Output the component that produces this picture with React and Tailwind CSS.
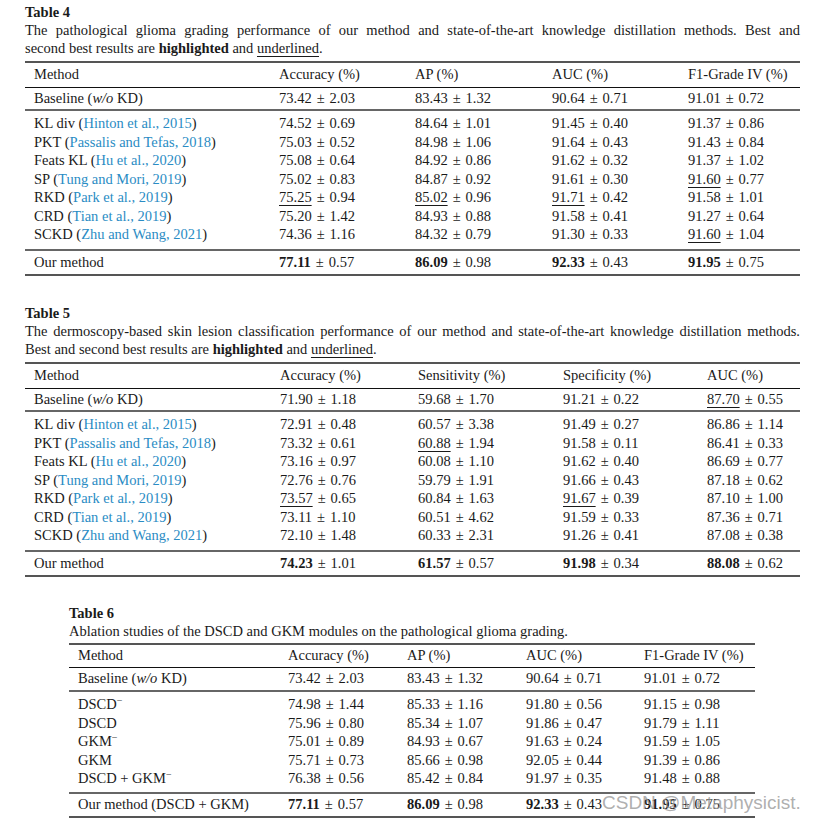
const LINK = "text-[#2a8cc4]";

const t4 = [
  ["KL div", "Hinton et al., 2015", ["74.52", "0.69"], ["84.64", "1.01"], ["91.45", "0.40"], ["91.37", "0.86"]],
  ["PKT", "Passalis and Tefas, 2018", ["75.03", "0.52"], ["84.98", "1.06"], ["91.64", "0.43"], ["91.43", "0.84"]],
  ["Feats KL", "Hu et al., 2020", ["75.08", "0.64"], ["84.92", "0.86"], ["91.62", "0.32"], ["91.37", "1.02"]],
  ["SP", "Tung and Mori, 2019", ["75.02", "0.83"], ["84.87", "0.92"], ["91.61", "0.30"], ["91.60", "0.77", "u"]],
  ["RKD", "Park et al., 2019", ["75.25", "0.94", "u"], ["85.02", "0.96", "u"], ["91.71", "0.42", "u"], ["91.58", "1.01"]],
  ["CRD", "Tian et al., 2019", ["75.20", "1.42"], ["84.93", "0.88"], ["91.58", "0.41"], ["91.27", "0.64"]],
  ["SCKD", "Zhu and Wang, 2021", ["74.36", "1.16"], ["84.32", "0.79"], ["91.30", "0.33"], ["91.60", "1.04", "u"]],
];

const t5 = [
  ["KL div", "Hinton et al., 2015", ["72.91", "0.48"], ["60.57", "3.38"], ["91.49", "0.27"], ["86.86", "1.14"]],
  ["PKT", "Passalis and Tefas, 2018", ["73.32", "0.61"], ["60.88", "1.94", "u"], ["91.58", "0.11"], ["86.41", "0.33"]],
  ["Feats KL", "Hu et al., 2020", ["73.16", "0.97"], ["60.08", "1.10"], ["91.62", "0.40"], ["86.69", "0.77"]],
  ["SP", "Tung and Mori, 2019", ["72.76", "0.76"], ["59.79", "1.91"], ["91.66", "0.43"], ["87.18", "0.62"]],
  ["RKD", "Park et al., 2019", ["73.57", "0.65", "u"], ["60.84", "1.63"], ["91.67", "0.39", "u"], ["87.10", "1.00"]],
  ["CRD", "Tian et al., 2019", ["73.11", "1.10"], ["60.51", "4.62"], ["91.59", "0.33"], ["87.36", "0.71"]],
  ["SCKD", "Zhu and Wang, 2021", ["72.10", "1.48"], ["60.33", "2.31"], ["91.26", "0.41"], ["87.08", "0.38"]],
];

const t6 = [
  ["DSCD", true, ["74.98", "1.44"], ["85.33", "1.16"], ["91.80", "0.56"], ["91.15", "0.98"]],
  ["DSCD", false, ["75.96", "0.80"], ["85.34", "1.07"], ["91.86", "0.47"], ["91.79", "1.11"]],
  ["GKM", true, ["75.01", "0.89"], ["84.93", "0.67"], ["91.63", "0.24"], ["91.59", "1.05"]],
  ["GKM", false, ["75.71", "0.73"], ["85.66", "0.98"], ["92.05", "0.44"], ["91.39", "0.86"]],
  ["DSCD + GKM", true, ["76.38", "0.56"], ["85.42", "0.84"], ["91.97", "0.35"], ["91.48", "0.88"]],
];

function Val({ v }) {
  const [m, s, mark] = v;
  let head = <span>{m}</span>;
  if (mark === "u") head = <span className="underline decoration-1 underline-offset-[3px]">{m}</span>;
  if (mark === "b") head = <span className="font-bold">{m}</span>;
  return (
    <span>
      {head}
      <span className="mx-[5px]">±</span>
      {s}
    </span>
  );
}

function Row({ cols, cells, className = "" }) {
  return (
    <div className={`grid ${cols} ${className}`}>
      {cells.map((c, i) => (
        <div key={i} className="pl-[9px] whitespace-nowrap">
          {c}
        </div>
      ))}
    </div>
  );
}

function Caption({ title, lines }) {
  return (
    <div className="leading-[18px]">
      <div className="font-bold">{title}</div>
      {lines.map((l, i) => (
        <div
          key={i}
          className={i < lines.length - 1 ? "text-justify [text-align-last:justify]" : ""}
        >
          {l}
        </div>
      ))}
    </div>
  );
}

const hl = (
  <>
    <span className="font-bold">highlighted</span> and{" "}
    <span className="underline decoration-1 underline-offset-[3px]">underlined</span>.
  </>
);

function Cite({ name, cite }) {
  return (
    <span>
      {name} (<span className={LINK}>{cite}</span>)
    </span>
  );
}

const baseline = (
  <span>
    Baseline (<span className="italic">w/o</span> KD)
  </span>
);

function BigTable({ cols, headers, base, rows, ours }) {
  return (
    <div className="mt-[4px] border-t-2 border-b-2 border-[#555]">
      <Row cols={cols} cells={headers} className="h-[25px] items-center border-b border-[#111]" />
      <Row cols={cols} cells={[baseline, ...base.map((v, i) => <Val key={i} v={v} />)]} className="h-[23px] items-center border-b-2 border-[#666]" />
      <div className="h-[134px] py-[2px] border-b-2 border-[#666] box-content">
        {rows.map((r, i) => (
          <Row
            key={i}
            cols={cols}
            className="h-[18.5px] items-center"
            cells={[<Cite name={r[0]} cite={r[1]} />, ...r.slice(2).map((v, j) => <Val key={j} v={v} />)]}
          />
        ))}
      </div>
      <Row cols={cols} cells={ours} className="h-[23px] items-center" />
    </div>
  );
}

export default function App() {
  return (
    <div
      className="relative w-[814px] h-[823px] bg-white text-[#1a1a1a] text-[14.5px] overflow-hidden"
      style={{ fontFamily: '"Liberation Serif", "Times New Roman", serif' }}
    >
      <div className="pl-[25px] pr-[14px] pt-[3px]">
        <Caption
          title="Table 4"
          lines={[
            "The pathological glioma grading performance of our method and state-of-the-art knowledge distillation methods. Best and",
            <>second best results are {hl}</>,
          ]}
        />
        <BigTable
          cols="grid-cols-[245px_136px_137px_136px_121px]"
          headers={["Method", "Accuracy (%)", "AP (%)", "AUC (%)", "F1-Grade IV (%)"]}
          base={[["73.42", "2.03"], ["83.43", "1.32"], ["90.64", "0.71"], ["91.01", "0.72"]]}
          rows={t4}
          ours={[
            "Our method",
            <Val v={["77.11", "0.57", "b"]} />,
            <Val v={["86.09", "0.98", "b"]} />,
            <Val v={["92.33", "0.43", "b"]} />,
            <Val v={["91.95", "0.75", "b"]} />,
          ]}
        />

        <div className="mt-[28px]">
          <Caption
            title="Table 5"
            lines={[
              "The dermoscopy-based skin lesion classification performance of our method and state-of-the-art knowledge distillation methods.",
              <>Best and second best results are {hl}</>,
            ]}
          />
        </div>
        <BigTable
          cols="grid-cols-[246px_138px_145px_144px_102px]"
          headers={["Method", "Accuracy (%)", "Sensitivity (%)", "Specificity (%)", "AUC (%)"]}
          base={[["71.90", "1.18"], ["59.68", "1.70"], ["91.21", "0.22"], ["87.70", "0.55", "u"]]}
          rows={t5}
          ours={[
            "Our method",
            <Val v={["74.23", "1.01", "b"]} />,
            <Val v={["61.57", "0.57", "b"]} />,
            <Val v={["91.98", "0.34", "b"]} />,
            <Val v={["88.08", "0.62", "b"]} />,
          ]}
        />
      </div>

      <div className="ml-[69px] w-[686px] mt-[27px]">
        <Caption title="Table 6" lines={["Ablation studies of the DSCD and GKM modules on the pathological glioma grading."]} />
        <div className="mt-[3px] border-t-2 border-b-2 border-[#555]">
          {(() => {
            const cols = "grid-cols-[210px_119px_119px_118px_120px]";
            return (
              <>
                <Row cols={cols} cells={["Method", "Accuracy (%)", "AP (%)", "AUC (%)", "F1-Grade IV (%)"]} className="h-[23px] items-center border-b border-[#111]" />
                <Row
                  cols={cols}
                  cells={[baseline, <Val v={["73.42", "2.03"]} />, <Val v={["83.43", "1.32"]} />, <Val v={["90.64", "0.71"]} />, <Val v={["91.01", "0.72"]} />]}
                  className="h-[24px] items-center border-b-2 border-[#666]"
                />
                <div className="h-[96px] py-[2px] border-b-2 border-[#666] box-content">
                  {t6.map((r, i) => (
                    <Row
                      key={i}
                      cols={cols}
                      className="h-[18.5px] items-center"
                      cells={[
                        <span>
                          {r[0]}
                          {r[1] && <sup className="text-[10px]">−</sup>}
                        </span>,
                        ...r.slice(2).map((v, j) => <Val key={j} v={v} />),
                      ]}
                    />
                  ))}
                </div>
                <Row
                  cols={cols}
                  cells={[
                    "Our method (DSCD + GKM)",
                    <Val v={["77.11", "0.57", "b"]} />,
                    <Val v={["86.09", "0.98", "b"]} />,
                    <Val v={["92.33", "0.43", "b"]} />,
                    <Val v={["91.95", "0.75", "b"]} />,
                  ]}
                  className="h-[22px] items-center"
                />
              </>
            );
          })()}
        </div>
      </div>

      <div
        className="absolute left-[602px] top-[792px] whitespace-nowrap text-[19px] leading-[22px] text-[#9a9a9a]/80"
        style={{ fontFamily: '"Liberation Sans", Arial, sans-serif' }}
      >
        CSDN @Metaphysicist.
      </div>
    </div>
  );
}
